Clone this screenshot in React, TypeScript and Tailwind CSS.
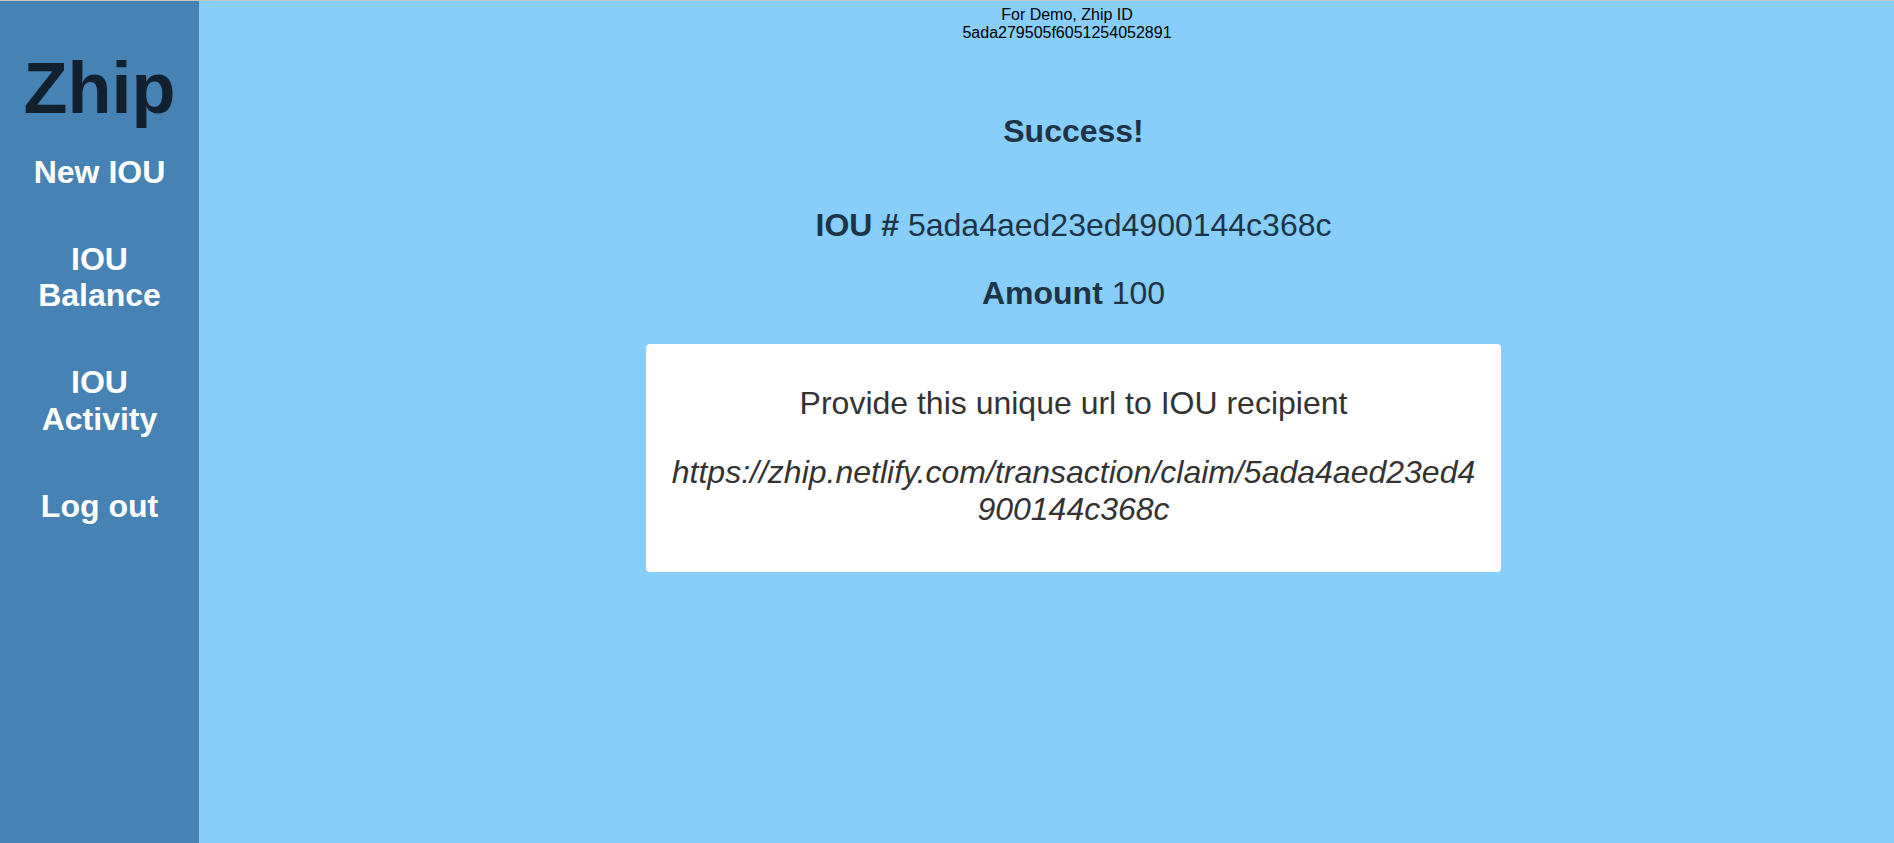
const navItems = ["New IOU", "IOU Balance", "IOU Activity", "Log out"];

const App = () => {
    return (
        <div className="min-h-screen flex flex-row border-t border-[#c3c3c3] bg-[#87cefa] font-['Liberation_Sans',Arial,sans-serif] leading-[1.15]">
            <div className="w-[199px] shrink-0 bg-[#4682b4] flex flex-col items-center pt-[46px] px-4 text-center">
                <div className="text-[72px] font-bold text-[#13202d] leading-[1.15]">Zhip</div>
                <div className="mt-[24px] flex flex-col items-center gap-[50px] text-[32px] font-bold text-white">
                    {navItems.map((item) => (
                        <a key={item} href="#" className="leading-[1.15] cursor-pointer">
                            {item}
                        </a>
                    ))}
                </div>
            </div>
            <div className="flex-1 flex flex-col">
                <div className="pt-[5px] pl-[41px] text-center text-[16px] text-black leading-[1.15]">
                    <div>For Demo, Zhip ID</div>
                    <div>5ada279505f6051254052891</div>
                </div>
                <div className="pl-[54px] flex flex-col items-center text-center text-[32px] text-[#1f3346]">
                    <div className="mt-[70px] font-bold">Success!</div>
                    <div className="mt-[57px]">
                        <span className="font-bold">IOU #</span> 5ada4aed23ed4900144c368c
                    </div>
                    <div className="mt-[32px]">
                        <span className="font-bold">Amount</span> 100
                    </div>
                    <div className="mt-[32px] w-[855px] bg-white rounded-[4px] pt-[41px] pb-[44px] px-5 flex flex-col gap-[32px] text-[#333333]">
                        <p>Provide this unique url to IOU recipient</p>
                        <p className="italic break-all">
                            https://zhip.netlify.com/transaction/claim/5ada4aed23ed4900144c368c
                        </p>
                    </div>
                </div>
            </div>
        </div>
    );
};

export default App;
